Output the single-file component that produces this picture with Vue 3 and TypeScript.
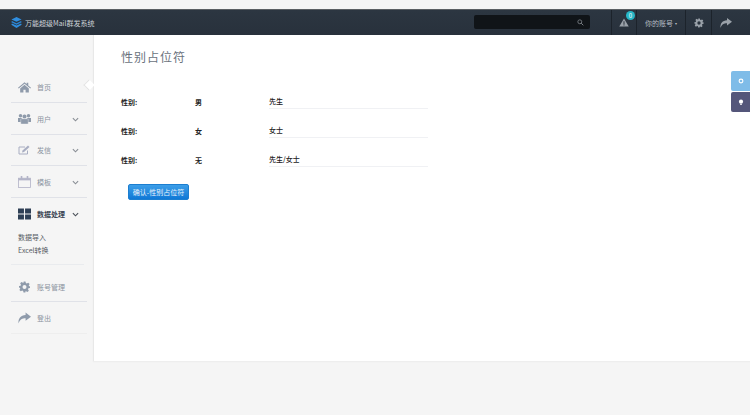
<script setup lang="ts">
interface NavItem { label: string; icon: string; arrow: boolean; h: number }
const nav: NavItem[] = [
  { label: '首页', icon: 'home', arrow: false, h: 32 },
  { label: '用户', icon: 'users', arrow: true, h: 32 },
  { label: '发信', icon: 'edit', arrow: true, h: 31 },
  { label: '模板', icon: 'cal', arrow: true, h: 32 },
]
const rows = [
  { k: '性别:', v: '男', t: '先生' },
  { k: '性别:', v: '女', t: '女士' },
  { k: '性别:', v: '无', t: '先生/女士' },
]
</script>

<template>
  <div class="page">
    <header class="top">
      <div class="brand">
        <svg class="logo" viewBox="0 0 12 12"><path d="M6 0l5.500 2.600L6 5.200.5 2.600z" fill="#2f8ee0"/><path d="M1 4.300L6 6.700l5-2.400 .6 1.400L6 8.400.4 5.700z" fill="#2a85d6"/><path d="M1 7l5 2.400L11 7l.6 1.500L6 12 .4 8.500z" fill="#2f8ee0"/></svg>
        <span>万能超级Mail群发系统</span>
      </div>
      <div class="search">
        <svg class="sicon" viewBox="0 0 10 10"><circle cx="4" cy="4" r="2.800" fill="none" stroke="#7d8288" stroke-width="1.200"/><path d="M6 6l3 3" stroke="#7d8288" stroke-width="1.400"/></svg>
      </div>
      <div class="cell alert">
        <svg class="tri" viewBox="0 0 12 11"><path d="M6 .5L11.800 10.500H.2z" fill="#9aa1a9"/><path d="M5.400 4h1.200v3.500H5.400zM5.400 8h1.200v1.200H5.400z" fill="#2b333e"/></svg>
        <b class="badge">0</b>
      </div>
      <div class="cell acct">你的账号 <i class="caret">▾</i></div>
      <div class="cell tool">
        <svg class="gear" viewBox="0 0 24 24"><path fill="#9aa1a9" fill-rule="evenodd" d="M10 1h4l.7 3.200 1.900.8 2.800-1.700 2.800 2.800-1.700 2.800.8 1.900L23 10v4l-3.200.7-.8 1.900 1.700 2.800-2.800 2.800-2.800-1.700-1.900.8L14 23h-4l-.7-3.200-1.900-.8-2.800 1.700-2.800-2.800 1.700-2.800-.8-1.900L1 14v-4l3.200-.7.8-1.900-1.700-2.800 2.800-2.800 2.800 1.700 1.900-.8zM12 8a4 4 0 100 8 4 4 0 000-8z"/></svg>
      </div>
      <div class="cell tool last">
        <svg class="share" viewBox="0 0 24 20"><path fill="#9aa1a9" d="M14 0l10 7.500L14 15v-4.500C8 10.500 3.500 12.500 1 20 0 11 5 4.800 14 4.500z"/></svg>
      </div>
    </header>

    <div class="body">
      <aside class="side">
        <div v-for="n in nav" :key="n.label" class="nav" :style="{ height: n.h + 'px' }">
          <span class="ic">
            <svg v-if="n.icon === 'home'" viewBox="0 0 24 20"><path fill="#8f9bab" d="M12 1l4 3.400V2h3v5l5 4.300-1.300 1.500L12 3.800 1.300 12.800 0 11.300z"/><path fill="#8f9bab" d="M12 6l8 6.800V20h-6v-5h-4v5H4v-7.200z"/></svg>
            <svg v-else-if="n.icon === 'users'" viewBox="0 0 26 20"><g fill="#8f9bab"><circle cx="5" cy="3.500" r="3.500"/><circle cx="21" cy="3.500" r="3.500"/><circle cx="13" cy="5" r="4"/><path d="M0 8h8v8H0zM18 8h8v8h-8z"/><rect x="5.500" y="9.500" width="15" height="10.500" rx="1.500" stroke="#f5f5f5" stroke-width=".8"/></g></svg>
            <svg v-else-if="n.icon === 'edit'" viewBox="0 0 26 20"><path d="M19 11v7H2V4h12" fill="none" stroke="#a9aec2" stroke-width="2"/><path d="M9 11L20 1l3 3-11 10-4 1z" fill="#a9aec2"/></svg>
            <svg v-else viewBox="0 0 24 22"><rect x="1" y="4" width="22" height="17" fill="none" stroke="#b3b4c8" stroke-width="1.500"/><path d="M1 4h22v4H1z" fill="#b3b4c8"/><path d="M5 0h3v6H5zM16 0h3v6h-3z" fill="#b3b4c8"/></svg>
          </span>
          <span class="lab">{{ n.label }}</span>
          <svg v-if="n.arrow" class="chev" viewBox="0 0 8 5"><path d="M1 1l3 3 3-3" fill="none" stroke="#8a8f96" stroke-width="1.300"/></svg>
          <span v-if="n.icon === 'home'" class="notch"></span>
        </div>

        <div class="nav open">
          <span class="ic">
            <svg viewBox="0 0 24 20"><path fill="#2e3f55" d="M0 0h11v9H0zM13 0h11v9H13zM0 11h11v9H0zM13 11h11v9H13z"/></svg>
          </span>
          <span class="lab strong">数据处理</span>
          <svg class="chev" viewBox="0 0 8 5"><path d="M1 1l3 3 3-3" fill="none" stroke="#4a5058" stroke-width="1.300"/></svg>
        </div>
        <div class="subs">
          <div>数据导入</div>
          <div>Excel转换</div>
        </div>

        <div class="nav acc">
          <span class="ic">
            <svg viewBox="0 0 24 24"><path fill="#8f9bab" fill-rule="evenodd" d="M10 1h4l.7 3.200 1.900.8 2.800-1.700 2.800 2.800-1.700 2.800.8 1.900L23 10v4l-3.200.7-.8 1.900 1.700 2.800-2.800 2.800-2.800-1.700-1.900.8L14 23h-4l-.7-3.200-1.900-.8-2.800 1.700-2.800-2.800 1.700-2.800-.8-1.900L1 14v-4l3.200-.7.8-1.900-1.700-2.800 2.800-2.800 2.800 1.700 1.900-.8zM12 8a4 4 0 100 8 4 4 0 000-8z"/></svg>
          </span>
          <span class="lab">账号管理</span>
        </div>
        <div class="nav exit">
          <span class="ic">
            <svg viewBox="0 0 24 20"><path fill="#8f9bab" d="M14 0l10 7.500L14 15v-4.500C8 10.500 3.500 12.500 1 20 0 11 5 4.800 14 4.500z"/></svg>
          </span>
          <span class="lab">登出</span>
        </div>
      </aside>

      <main class="main">
        <h1>性别占位符</h1>
        <div class="rows">
          <div v-for="r in rows" :key="r.v" class="row">
            <span class="k">{{ r.k }}</span>
            <span class="v">{{ r.v }}</span>
            <span class="t">{{ r.t }}</span>
          </div>
        </div>
        <button class="btn">确认-性别占位符</button>
      </main>
    </div>

    <div class="float">
      <div class="f1"><svg viewBox="0 0 8 8"><circle cx="4" cy="4" r="2.500" fill="none" stroke="#fff" stroke-width="1.500"/></svg></div>
      <div class="f2"><svg viewBox="0 0 8 8"><circle cx="4" cy="3.500" r="2.800" fill="#fff"/><rect x="2.800" y="6.500" width="2.400" height="1.300" fill="#fff"/></svg></div>
    </div>
  </div>
</template>

<style scoped>
.page {
  position: relative;
  width: 750px;
  height: 415px;
  overflow: hidden;
  background: #f5f5f5;
  font-family: "Noto Sans CJK SC", "Liberation Sans", sans-serif;
  padding-top: 9px;
  box-sizing: border-box;
}
.top {
  height: 26px;
  display: flex;
  align-items: stretch;
  box-sizing: border-box;
  border-top: 1px solid #5b5f63;
  background: linear-gradient(#2c3641, #28313c);
  color: #c9ced3;
}
.brand {
  display: flex;
  align-items: center;
  gap: 3px;
  padding-left: 11px;
  width: 474px;
  box-sizing: border-box;
  font-size: 7px;
  color: #cdd2d7;
}
.logo { width: 11px; height: 11px; }
.search {
  width: 116px;
  height: 14px;
  margin-top: 5px;
  background: #101418;
  border-radius: 2px;
  display: flex;
  align-items: center;
  justify-content: flex-end;
  padding-right: 6px;
  box-sizing: border-box;
}
.sicon { width: 7px; height: 7px; }
.cell {
  display: flex;
  align-items: center;
  justify-content: center;
  box-sizing: border-box;
  border-left: 1px solid #1c232b;
  position: relative;
}
.alert { width: 25px; margin-left: 21px; }
.tri { width: 10px; height: 9px; }
.badge {
  position: absolute;
  top: 1px;
  left: 14px;
  width: 9px;
  height: 9px;
  border-radius: 50%;
  background: #27b6c6;
  color: #fff;
  font-size: 6px;
  font-weight: 400;
  line-height: 9px;
  text-align: center;
}
.acct { width: 49px; font-size: 7px; color: #b9bec4; gap: 2px; }
.caret { font-style: normal; font-size: 4px; }
.tool { width: 26px; }
.last { width: 38px; justify-content: flex-start; padding-left: 8px; }
.gear { width: 10px; height: 10px; }
.share { width: 12px; height: 10px; }
.body { display: flex; height: 326px; }
.side { width: 93px; padding-top: 36px; box-sizing: border-box; flex: none; }
.nav {
  position: relative;
  display: flex;
  align-items: center;
  margin: 0 6px 0 11px;
  padding-left: 7px;
  box-sizing: border-box;
  border-bottom: 1px solid #e0e2e8;
}
.ic { width: 13px; height: 12px; display: flex; align-items: center; margin-right: 6px; flex: none; }
.ic svg { width: 13px; height: 12px; }
.lab { font-size: 7px; color: #8a93a0; }
.strong { color: #3c4654; font-weight: 700; }
.chev { position: absolute; right: 8px; top: 50%; margin-top: -2px; width: 7px; height: 5px; }
.notch {
  position: absolute;
  right: -6px;
  top: 10px;
  width: 8px;
  height: 8px;
  background: #fff;
  transform: rotate(45deg);
  border-left: 1px solid #e4e4e4;
  border-bottom: 1px solid #e4e4e4;
  box-sizing: border-box;
}
.open { height: 32px; border-bottom: 0; }
.subs {
  margin: 0 9px 0 11px;
  padding: 1px 0 0 7px;
  height: 35px;
  box-sizing: border-box;
  font-size: 7px;
  line-height: 13px;
  color: #555b63;
  border-bottom: 1px solid #e9ebee;
}
.acc { height: 37px; padding-top: 7px; }
.exit { height: 32px; border-bottom-color: #eeeeee; }
.main {
  flex: 1;
  background: #fff;
  border-left: 1px solid #e8e8e8;
  padding: 14px 0 0 27px;
  box-shadow: 0 1px 1px #eeeeee;
}
h1 {
  margin: 0;
  font-size: 12px;
  font-weight: 400;
  line-height: 16px;
  color: #6a727c;
  letter-spacing: 1px;
}
.rows { margin-top: 22px; }
.row {
  display: flex;
  align-items: center;
  height: 29px;
  font-size: 7px;
  color: #222222;
}
.k { width: 74px; font-weight: 700; }
.v { width: 74px; font-weight: 700; }
.t {
  width: 159px;
  height: 13px;
  line-height: 12px;
  margin-top: 1px;
  font-weight: 500;
  border-bottom: 1px solid #f0f1f4;
}
.btn {
  display: block;
  margin: 10px 0 0 7px;
  width: 61px;
  height: 16px;
  padding: 0;
  border: 1px solid #1c7ed0;
  border-radius: 2px;
  background: linear-gradient(#3c9ee8, #0f78d6);
  color: #e8f2fb;
  font-family: inherit;
  font-size: 7px;
}
.float { position: absolute; right: 0; top: 71px; width: 19px; }
.f1, .f2 {
  height: 20px;
  display: flex;
  align-items: center;
  justify-content: center;
  border-radius: 2px 0 0 2px;
}
.f1 { background: #7fbce8; }
.f2 { background: #54567a; margin-top: 1px; }
.float svg { width: 6px; height: 6px; }
</style>

<style>
html, body { margin: 0; }
</style>
